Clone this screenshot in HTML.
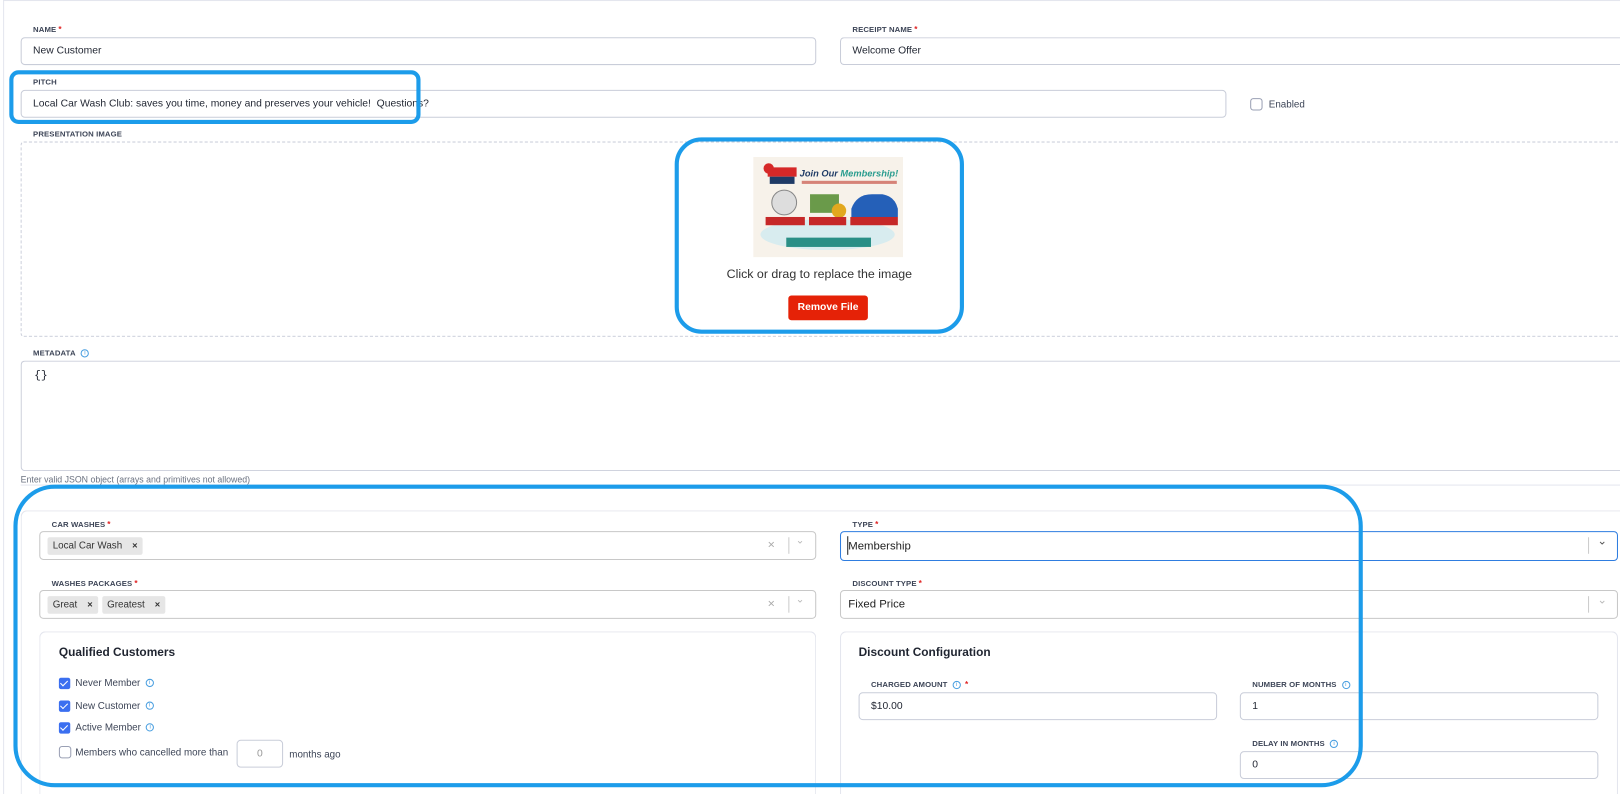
<!DOCTYPE html>
<html><head><meta charset="utf-8">
<style>
*{box-sizing:border-box;margin:0;padding:0}
html,body{width:1620px;height:794px;overflow:hidden}
body{background:#fff;font-family:"Liberation Sans",sans-serif;color:#1f2430}
#w{position:relative;width:1620px;height:794px;overflow:hidden}
#s{position:absolute;left:0;top:0;width:1568px;height:769px;transform:scale(1.0332);transform-origin:0 0}
.a{position:absolute}
.lbl{position:absolute;font-size:7.5px;font-weight:bold;color:#3d4557;letter-spacing:0.1px}
.lbl .r{color:#e02424;font-size:8px;vertical-align:top;margin-left:2px}
.inp{position:absolute;border:1px solid #c9cdd9;border-radius:4px;background:#fff;font-size:10px;padding-left:11px;display:flex;align-items:center;color:#1f2430}
.sel{position:absolute;border:1px solid #c8c8c8;border-radius:4px;background:#fff;font-size:10px;display:flex;align-items:center;padding-left:7px}
.tag{background:#e6e6e6;border-radius:2px;font-size:9.5px;padding:3px 5px;margin-right:4px;color:#333}
.tag b{font-size:9px;margin-left:7px}
.ico{display:inline-block;width:8px;height:8px;border:1px solid #4a9fe0;border-radius:50%;font-size:6px;line-height:6px;text-align:center;color:#4a9fe0;font-weight:normal;vertical-align:middle;margin-left:5px}
.cb{position:absolute;width:11px;height:11px;border-radius:2px;background:#3b6ff0}
.cb:after{content:"";position:absolute;left:3px;top:1px;width:3px;height:6px;border:solid #fff;border-width:0 1.5px 1.5px 0;transform:rotate(45deg)}
.cbt{position:absolute;font-size:9.5px;color:#3d4557}
.hl{position:absolute;border:4px solid #1c9cea}
.nr{border-right:none;border-top-right-radius:0;border-bottom-right-radius:0}
</style></head><body><div id="w"><div id="s">
<div class="a" style="left:3px;top:0;width:1px;height:794px;background:#e4e6ee"></div>
<div class="a" style="left:3px;top:0;width:1617px;height:1px;background:#e4e6ee"></div>

<div class="lbl" style="left:32px;top:24px">NAME<span class="r">*</span></div>
<div class="inp" style="left:20px;top:36px;width:770px;height:27px">New Customer</div>
<div class="lbl" style="left:825px;top:24px">RECEIPT NAME<span class="r">*</span></div>
<div class="inp nr" style="left:813px;top:36px;width:807px;height:27px">Welcome Offer</div>

<div class="lbl" style="left:32px;top:75px">PITCH</div>
<div class="inp" style="left:20px;top:87px;width:1167px;height:27px">Local Car Wash Club: saves you time, money and preserves your vehicle!&nbsp; Questions?</div>
<div class="a" style="left:1210px;top:95px;width:12px;height:12px;border:1px solid #9aa0b4;border-radius:3px"></div>
<div class="a" style="left:1228px;top:96px;font-size:9.5px;color:#3d4557">Enabled</div>

<div class="lbl" style="left:32px;top:125px">PRESENTATION IMAGE</div>
<div class="a nr" style="left:20px;top:137px;width:1600px;height:189px;border:1px dashed #c9cdd9;border-right:none;border-radius:3px 0 0 3px"></div>
<svg class="a" style="left:729px;top:152px" width="145" height="97" viewBox="0 0 145 97">
<rect width="145" height="97" fill="#f7f2ea"/>
<ellipse cx="72" cy="75" rx="65" ry="15" fill="#d8ecef"/>
<rect x="14" y="10" width="28" height="9" fill="#d62828"/>
<rect x="16" y="19" width="24" height="7" fill="#1f3b66"/>
<circle cx="15" cy="11" r="5" fill="#d62828"/>
<text x="45" y="19" font-size="9" font-weight="bold" font-style="italic" fill="#1f3b66" font-family="Liberation Sans">Join Our <tspan fill="#2a9d8f">Membership!</tspan></text>
<rect x="47" y="23" width="92" height="3" fill="#c0392b" opacity=".6"/>
<circle cx="30" cy="44" r="12" fill="#ddd" stroke="#888"/>
<rect x="55" y="36" width="28" height="18" fill="#6a9a4a"/>
<circle cx="83" cy="52" r="7" fill="#e2a81e"/>
<path d="M95 50 q5-14 20-14 h10 q12 2 15 14 v8 h-45z" fill="#2560b8"/>
<rect x="12" y="58" width="38" height="8" fill="#c62828"/>
<rect x="54" y="58" width="36" height="8" fill="#c62828"/>
<rect x="94" y="58" width="46" height="8" fill="#c62828"/>
<rect x="32" y="78" width="82" height="9" fill="#2a8f86"/>
</svg>
<div class="a" style="left:654px;top:258px;width:278px;text-align:center;font-size:12px;color:#333">Click or drag to replace the image</div>
<div class="a" style="left:763px;top:286px;width:77px;height:24px;background:#e52207;border-radius:3px;color:#fff;font-size:10px;font-weight:bold;text-align:center;line-height:24px">Remove File</div>

<div class="lbl" style="left:32px;top:337px">METADATA<span class="ico">i</span></div>
<div class="a nr" style="left:20px;top:349px;width:1600px;height:107px;border:1px solid #c9cdd9;border-right:none;border-radius:4px 0 0 4px;padding:8px 12px;font-family:'Liberation Mono',monospace;font-size:11px">{}</div>
<div class="a" style="left:20px;top:459px;font-size:8.5px;color:#6b7280">Enter valid JSON object (arrays and primitives not allowed)</div>
<div class="a" style="left:20px;top:469px;width:1600px;height:1px;background:#e4e6ee"></div>
<div class="a" style="left:20px;top:494px;width:1600px;height:300px;border:1px solid #e4e6ee;border-right:none;border-bottom:none;border-radius:6px 0 0 0"></div>

<div class="lbl" style="left:50px;top:503px">CAR WASHES<span class="r">*</span></div>
<div class="sel" style="left:38px;top:514px;width:752px;height:28px"><span class="tag">Local Car Wash <b>×</b></span></div>
<div class="lbl" style="left:50px;top:560px">WASHES PACKAGES<span class="r">*</span></div>
<div class="sel" style="left:38px;top:571px;width:752px;height:28px"><span class="tag">Great <b>×</b></span><span class="tag">Greatest <b>×</b></span></div>
<div class="a" style="left:743px;top:520px;color:#aaa;font-size:12px">×</div>
<div class="a" style="left:763px;top:520px;width:1px;height:16px;background:#ccc"></div>
<div class="a" style="left:770px;top:518px;color:#bbb;font-size:10px">⌄</div>
<div class="a" style="left:743px;top:577px;color:#aaa;font-size:12px">×</div>
<div class="a" style="left:763px;top:577px;width:1px;height:16px;background:#ccc"></div>
<div class="a" style="left:770px;top:575px;color:#bbb;font-size:10px">⌄</div>

<div class="lbl" style="left:825px;top:503px">TYPE<span class="r">*</span></div>
<div class="sel" style="left:813px;top:514px;width:753px;height:29px;border:1.5px solid #2f7de0;font-size:11px;color:#222">Membership</div>
<div class="a" style="left:820px;top:519px;width:1px;height:18px;background:#222"></div>
<div class="a" style="left:1537px;top:520px;width:1px;height:16px;background:#ccc"></div>
<div class="a" style="left:1546px;top:517px;color:#555;font-size:11px">⌄</div>
<div class="lbl" style="left:825px;top:560px">DISCOUNT TYPE<span class="r">*</span></div>
<div class="sel" style="left:813px;top:571px;width:753px;height:28px;font-size:11px;color:#222">Fixed Price</div>
<div class="a" style="left:1537px;top:577px;width:1px;height:16px;background:#ccc"></div>
<div class="a" style="left:1546px;top:574px;color:#bbb;font-size:11px">⌄</div>

<div class="a" style="left:38px;top:611px;width:752px;height:183px;border:1px solid #e4e6ee;border-bottom:none;border-radius:6px 6px 0 0"></div>
<div class="a" style="left:57px;top:626px;font-size:11.5px;font-weight:bold;color:#1f2430">Qualified Customers</div>
<div class="cb" style="left:57px;top:656px"></div><div class="cbt" style="left:73px;top:656px">Never Member<span class="ico">i</span></div>
<div class="cb" style="left:57px;top:678px"></div><div class="cbt" style="left:73px;top:678px">New Customer<span class="ico">i</span></div>
<div class="cb" style="left:57px;top:699px"></div><div class="cbt" style="left:73px;top:699px">Active Member<span class="ico">i</span></div>
<div class="a" style="left:57px;top:722px;width:12px;height:12px;border:1px solid #9aa0b4;border-radius:3px"></div>
<div class="cbt" style="left:73px;top:723px">Members who cancelled more than</div>
<div class="a" style="left:229px;top:716px;width:45px;height:27px;border:1px solid #c9cdd9;border-radius:4px;font-size:10px;color:#999;text-align:center;line-height:25px">0</div>
<div class="cbt" style="left:280px;top:725px">months ago</div>

<div class="a" style="left:813px;top:611px;width:753px;height:183px;border:1px solid #e4e6ee;border-bottom:none;border-radius:6px 6px 0 0"></div>
<div class="a" style="left:831px;top:626px;font-size:11.5px;font-weight:bold;color:#1f2430">Discount Configuration</div>
<div class="lbl" style="left:843px;top:658px">CHARGED AMOUNT<span class="ico">i</span><span class="r" style="margin-left:4px">*</span></div>
<div class="inp" style="left:831px;top:670px;width:347px;height:27px">$10.00</div>
<div class="lbl" style="left:1212px;top:658px">NUMBER OF MONTHS<span class="ico">i</span></div>
<div class="inp" style="left:1200px;top:670px;width:347px;height:27px">1</div>
<div class="lbl" style="left:1212px;top:715px">DELAY IN MONTHS<span class="ico">i</span></div>
<div class="inp" style="left:1200px;top:727px;width:347px;height:27px">0</div>

<div class="hl" style="left:9px;top:68px;width:398px;height:52px;border-radius:9px"></div>
<div class="hl" style="left:653px;top:133px;width:280px;height:190px;border-radius:26px"></div>
<div class="hl" style="left:13px;top:469px;width:1306px;height:293px;border-radius:40px"></div>
</div></div></body></html>
